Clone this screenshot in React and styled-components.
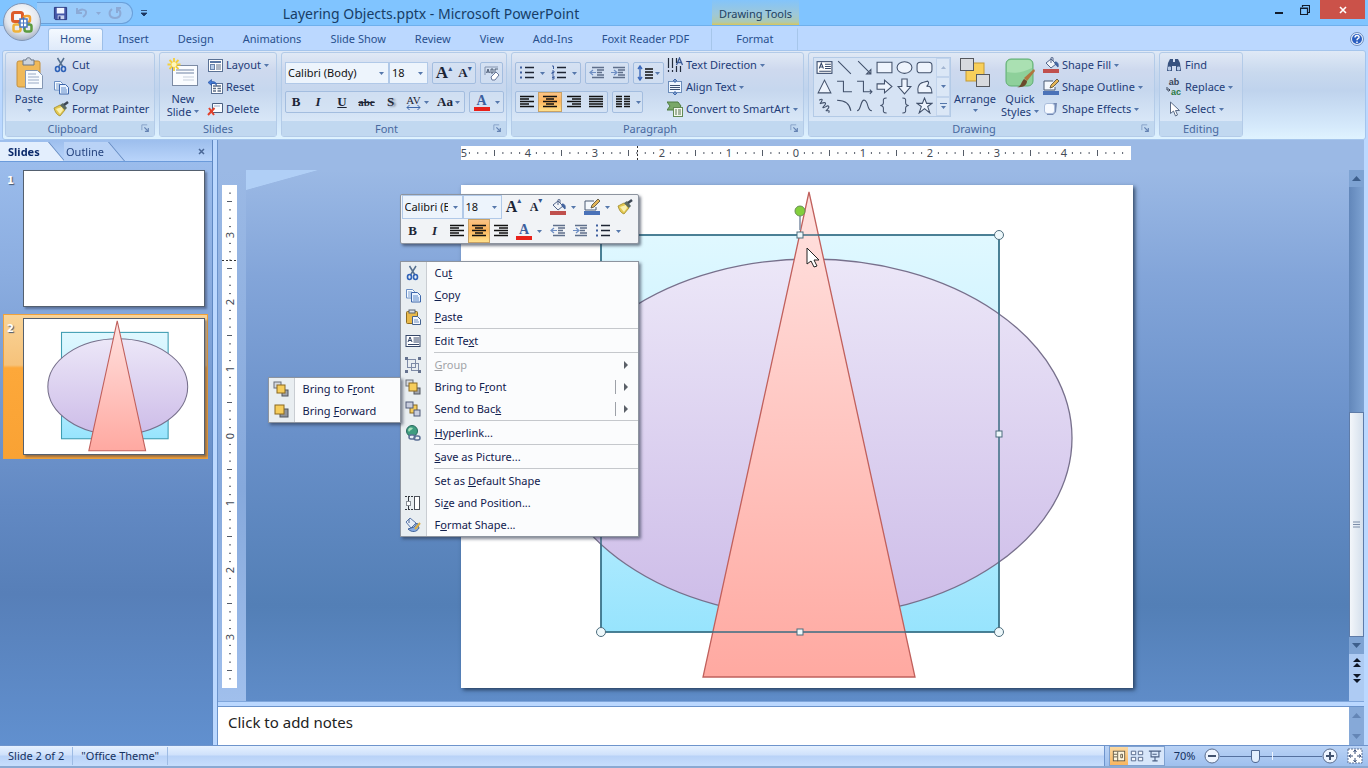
import { useState } from "react";
import styled, { createGlobalStyle, css } from "styled-components";

const ICONS = {
  cut: (
    <>
      <path d="M4.5 1 10 10M11 1 5.5 10" stroke="#56708f" strokeWidth="1.5" fill="none" />
      <ellipse cx="4.5" cy="12" rx="2" ry="2.5" fill="none" stroke="#2f62b8" strokeWidth="1.6" />
      <ellipse cx="10.5" cy="12" rx="2" ry="2.5" fill="none" stroke="#2f62b8" strokeWidth="1.6" />
    </>
  ),
  copy: (
    <>
      <path d="M1.5 2.5h6l2 2V11h-8z" fill="#f6fbff" stroke="#6b8fc4" />
      <path d="M3 5h4M3 7h4M3 9h3" stroke="#7d9fd0" />
      <path d="M6.5 5.5h6l3 3V15h-9z" fill="#eaf3ff" stroke="#3c66ab" />
      <path d="M8 9h5M8 11h6M8 13h6" stroke="#5f8bca" />
    </>
  ),
  paste: (
    <>
      <rect x="1.5" y="2.5" width="11" height="12" rx="1" fill="#e8b94a" stroke="#8c6c22" />
      <rect x="4" y="1" width="6" height="3" fill="#d9dde2" stroke="#59626e" />
      <path d="M7.5 7.5h5l3 3v5h-8z" fill="#f4f8ff" stroke="#44628f" />
      <path d="M9 11h4M9 13h5" stroke="#7190bf" />
    </>
  ),
  painter: (
    <>
      <path d="m1 7 6-3 5 5-5 6c-3-1-5-4-6-8z" fill="#e3c850" stroke="#a08a2c" strokeWidth=".8" />
      <path d="m3 8 6-2 1 3-3 4z" fill="#f9f0b0" />
      <path d="m7 4 3-2 4 5-2 2z" fill="#5c6b62" />
      <path d="m11 4 4-3" stroke="#3c4653" strokeWidth="2.5" />
    </>
  ),
  layout: (
    <>
      <rect x="1.5" y="2.5" width="14" height="12" fill="#fff" stroke="#5a7194" />
      <path d="M3 5h11" stroke="#5c79a5" strokeWidth="2" />
      <rect x="3.5" y="7.5" width="4" height="5" fill="#b9cde8" stroke="#6a84aa" />
      <path d="M9 8h5M9 10h5M9 12h5" stroke="#5d6f88" />
    </>
  ),
  reset: (
    <>
      <rect x="4.5" y="4.5" width="11" height="10" fill="#fff" stroke="#5a7194" />
      <path d="M6 7h8M6 9.5h3M10.5 9.5H14M6 12h3M10.5 12H14" stroke="#5d6f88" strokeWidth="1.4" />
      <path d="M1 3.5 4.5.5v2c4 0 5 1.5 5 4-1-2-2.5-2-5-2v2z" fill="#4279d6" stroke="#234f9c" strokeWidth=".6" />
    </>
  ),
  delete: (
    <>
      <path d="M5.5 2.5h10v9h-10z" fill="#f8fbff" stroke="#4a5f80" />
      <path d="M7 5h6" stroke="#9db0cb" />
      <path d="m2 7 5 7M7.5 7 1 14" stroke="#e2412b" strokeWidth="2" />
    </>
  ),
  textDirection: (
    <>
      <path d="M1.5 1v10M5.5 1v10M1.5 13v2M5.5 13v2" stroke="#222c3c" strokeWidth="1.2" />
      <path d="M9.5 15V9M13.5 15V9M9.5 6V1" stroke="#222c3c" strokeWidth="1.2" />
      <path d="m9.5 8 3-7 3 7M10.5 5.5h4" stroke="#3a5a96" strokeWidth="1.3" fill="none" />
    </>
  ),
  alignText: (
    <>
      <rect x="1.5" y="2.5" width="13" height="11" fill="#eff6ff" stroke="#6b8cba" />
      <path d="M3 6.5h10M3 8.5h10M3 10.5h10" stroke="#3d5273" />
      <path d="M8 0v4M6 2l2-2 2 2M8 12v4M6 14l2 2 2-2" stroke="#3e68ad" fill="none" />
    </>
  ),
  smartArt: (
    <>
      <path d="M0 1h11l3 4-3 4H0l3-4z" fill="#79a868" stroke="#4f7c42" />
      <rect x="6.5" y="6.5" width="9" height="9" fill="#f3f9ee" stroke="#628a54" />
      <path d="M8 9h2M11 9h3M8 11h2M11 11h3M8 13h2M11 13h3" stroke="#56704c" />
    </>
  ),
  fill: (
    <>
      <path d="m3 6 5-4 5 5-5 4z" fill="#f2f4f8" stroke="#52658a" />
      <path d="M8 6V1c0-1 2-1 2 0v3" fill="none" stroke="#52658a" />
      <path d="M12 5c3 0 3.5 2 3 5-1.5-1-2-2-3-3z" fill="#44659f" stroke="#44659f" />
      <rect y="12" width="16" height="4" fill="#c0504d" />
    </>
  ),
  outline: (
    <>
      <path d="M10 2H1v9h11V8" fill="#f4f8fd" stroke="#4a5a74" />
      <path d="m7 9 1-3 6-6 2 2-6 6z" fill="#e4b455" stroke="#4c4634" strokeWidth=".8" />
      <rect y="12" width="16" height="4" fill="#4a72b8" />
    </>
  ),
  effects: (
    <>
      <path d="M3 5 6 2h8l-1 9-3 3H4z" fill="#7489b2" />
      <rect x="1.5" y="2.5" width="10" height="10" rx="2.5" fill="#f5f9ff" stroke="#aabddc" />
    </>
  ),
  find: (
    <>
      <path d="M2 6 4 2h3v3h2V2h3l2 4 1 8h-5V9H6v5H1z" fill="#38527f" />
      <path d="M2.5 10h2v3h-2zM11.5 10h2v3h-2z" fill="#b9cbe6" stroke="#b9cbe6" />
    </>
  ),
  select: <path d="M4.5 1v11.5l3-2.5 2 5 2-1-2-4.5h4z" fill="#fff" stroke="#5a6b86" />,
  textBox: (
    <>
      <rect x="1" y="2.5" width="14" height="11" fill="#fff" stroke="#36486a" />
      <path d="m3 9 2-5 2 5M4 7.5h2M8.5 5H14M8.5 7H14M8.5 9H14M3 11.5h11" stroke="#36486a" fill="none" />
    </>
  ),
  group: (
    <>
      <rect x="2.5" y="2.5" width="8" height="8" fill="none" stroke="#7e8ba6" />
      <rect x="6.5" y="6.5" width="7" height="7" fill="none" stroke="#7e8ba6" />
      <path d="M0 0h3v3H0zM13 0h3v3h-3zM0 13h3v3H0zM13 13h3v3h-3z" fill="#66738f" />
    </>
  ),
  bringFront: (
    <>
      <rect x="1" y="1" width="7" height="6" fill="#d5d9df" stroke="#6a6f78" />
      <rect x="9" y="9" width="6" height="6" fill="#a0a5ae" stroke="#50555e" />
      <rect x="4" y="4" width="8" height="8" fill="#f6cd5c" stroke="#8a6820" />
    </>
  ),
  bringForward: (
    <>
      <rect x="7" y="6" width="8" height="8" fill="#8e939c" stroke="#50555e" />
      <rect x="2" y="2" width="9" height="9" fill="#f6cd5c" stroke="#8a6820" />
    </>
  ),
  sendBack: (
    <>
      <rect x="5" y="4" width="7" height="8" fill="#f6cd5c" stroke="#8a6820" />
      <rect x="1" y="1" width="7" height="6" fill="#c8cddd" stroke="#505b78" />
      <rect x="9" y="9" width="6" height="6" fill="#c8cddd" stroke="#505b78" />
    </>
  ),
  link: (
    <>
      <circle cx="7" cy="6" r="5.5" fill="#3f9c80" stroke="#27695d" />
      <path d="M3 5c1-3 3-3 5-2-1 2-3 2-4 4z" fill="#a5dfb9" />
      <rect x="4" y="10" width="6" height="4" rx="2" fill="#e8eef6" stroke="#5a6f95" strokeWidth="1.5" />
      <rect x="9" y="11" width="6" height="4" rx="2" fill="none" stroke="#5a6f95" strokeWidth="1.5" />
    </>
  ),
  size: (
    <>
      <rect x="9.5" y="1.5" width="5" height="13" fill="#fff" stroke="#4b5159" />
      <rect x="1.5" y="6.5" width="4" height="4" fill="#fff" stroke="#8a9097" />
      <path d="M0 1.5h9M0 14.5h9" stroke="#33373d" strokeDasharray="2 1" />
      <path d="M3.5 2v4M3.5 11v3" stroke="#33373d" />
    </>
  ),
  formatShape: (
    <>
      <path d="m1 5 4-4 6 5-5 5z" fill="#e8eef8" stroke="#5877aa" />
      <path d="M4 6V2" stroke="#44608f" />
      <path d="M3 12c4 4 9 3 11-1l-2-5-3 4z" fill="#86abe2" stroke="#42649c" />
      <path d="m10 12 5-6" stroke="#dcae45" strokeWidth="2" />
    </>
  ),
  alignLeft: <path d="M1 2.5h14M1 5h9M1 7.5h14M1 10h9M1 12.5h14" stroke="#111" strokeWidth="1.4" />,
  alignCenter: <path d="M1 2.5h14M4 5h8M1 7.5h14M4 10h8M1 12.5h14" stroke="#111" strokeWidth="1.4" />,
  alignRight: <path d="M1 2.5h14M6 5h9M1 7.5h14M6 10h9M1 12.5h14" stroke="#111" strokeWidth="1.4" />,
  justify: <path d="M1 2.5h14M1 5h14M1 7.5h14M1 10h14M1 12.5h14" stroke="#111" strokeWidth="1.4" />,
  columns: (
    <path d="M1 2.5h6M1 5h6M1 7.5h6M1 10h6M1 12.5h6M9 2.5h6M9 5h6M9 7.5h6M9 10h6M9 12.5h6" stroke="#111" strokeWidth="1.4" />
  ),
  bullets: (
    <>
      <path d="M6 2.5h9M6 7.5h9M6 12.5h9" stroke="#1d2433" strokeWidth="1.3" />
      <path d="M1 1.5h2v2H1zM1 6.5h2v2H1zM1 11.5h2v2H1z" fill="#3f5f9e" />
    </>
  ),
  numbering: (
    <>
      <path d="M6 2.5h9M6 7.5h9M6 12.5h9" stroke="#1d2433" strokeWidth="1.3" />
      <path d="M1 1h1.5v3M1 6h2v1.5H1V9h2M1 11h2v3H1M1 12.5h2" stroke="#3f5f9e" fill="none" />
    </>
  ),
  outdent: (
    <>
      <path d="M3 2.5h12M8 5h7M8 7.5h5M8 10h7M3 12.5h12" stroke="#5f6f8b" strokeWidth="1.3" />
      <path d="M1 7.5h6M4 5 1 7.5 4 10" stroke="#6f8fc4" fill="none" strokeWidth="1.2" />
    </>
  ),
  indent: (
    <>
      <path d="M3 2.5h12M8 5h7M8 7.5h5M8 10h7M3 12.5h12" stroke="#5f6f8b" strokeWidth="1.3" />
      <path d="M1 7.5h6M4 5l3 2.5L4 10" stroke="#6f8fc4" fill="none" strokeWidth="1.2" />
    </>
  ),
  lineSpacing: (
    <>
      <path d="M8 4h8M8 7h8M8 10h8M8 13h8" stroke="#111" strokeWidth="1.4" />
      <path d="M3 1v14M1 4l2-3 2 3M1 12l2 3 2-3" stroke="#3f6bbb" strokeWidth="1.4" fill="none" />
    </>
  ),
  eraser: (
    <>
      <path d="M1 10V2h13" fill="none" stroke="#8393ae" />
      <path d="m2.5 8 1.5-4 1.5 4M3 7h2M7 4v4h2V4zM14 4h-3v4h2" stroke="#33415c" fill="none" strokeWidth=".8" />
      <path d="m7 12 5-5 3 3-4 5H8z" fill="#fff" stroke="#68779a" />
    </>
  ),
  launcher: (
    <>
      <path d="M1.5 11V1.5H11" stroke="#7f9ac4" strokeWidth="1.5" fill="none" />
      <path d="m6 6 6 6M13 7v6H7" stroke="#6583b3" fill="none" strokeWidth="2" />
    </>
  ),
  save: (
    <>
      <path d="M1.5 1.5h13v13h-12l-1-1z" fill="#4457a8" stroke="#27357c" />
      <rect x="4" y="2" width="8" height="6" fill="#f1f5ff" />
      <rect x="5" y="10" width="7" height="4" fill="#c7d2ee" />
      <rect x="6" y="11" width="2" height="3" fill="#27357c" />
    </>
  ),
  undo: <path d="M3 3v5h5M3 8c3-5 10-4 9 0 0 2-2 3-3 4" fill="none" stroke="#8caad6" strokeWidth="2" />,
  redo: <path d="M5 4c-4 3-3 9 3 9s7-6 3-9M10 8V3h4" fill="none" stroke="#8caad6" strokeWidth="2" />,
  normalView: (
    <>
      <rect x="1.5" y="2.5" width="13" height="11" fill="#fff6dd" stroke="#5c5442" />
      <path d="M6.5 3v11M2 6h4M2 9h4M10 6h2v4h-2z" stroke="#5c5442" fill="none" />
    </>
  ),
  sorterView: (
    <path d="M1.5 2.5h5v4h-5zM9.5 2.5h5v4h-5zM1.5 9.5h5v4h-5zM9.5 9.5h5v4h-5z" fill="#f5f9ff" stroke="#4b5f83" />
  ),
  showView: <path d="M1 2.5h14M3.5 3v6h9V3M8 9v4M5 13.5h6M5 6h5" fill="none" stroke="#4b5f83" strokeWidth="1.3" />,
  fit: (
    <>
      <rect x="1" y="1" width="14" height="14" fill="#fff" stroke="#5b6f93" strokeDasharray="2 1" />
      <path d="M8 2v4M8 10v4M2 8h4M10 8h4M6.5 4 8 2l1.5 2M6.5 12 8 14l1.5-2M4 6.5 2 8l2 1.5M12 6.5 14 8l-2 1.5" stroke="#3d527a" fill="none" />
    </>
  ),
  minus: (
    <>
      <circle cx="8" cy="8" r="7" fill="#eef5ff" stroke="#5a6c8c" />
      <path d="M4 8h8" stroke="#42536f" strokeWidth="2" />
    </>
  ),
  plus: (
    <>
      <circle cx="8" cy="8" r="7" fill="#eef5ff" stroke="#5a6c8c" />
      <path d="M4 8h8M8 4v8" stroke="#42536f" strokeWidth="2" />
    </>
  )
};

const SHAPES = [
  { name: "Text Box", shape: ICONS.textBox },
  { name: "Line", shape: <path d="m2 2 12 12" /> },
  { name: "Arrow", shape: <path d="m2 2 12 12M14 10v4h-4z" /> },
  { name: "Rectangle", shape: <path d="M1 3h14v10H1z" /> },
  { name: "Oval", shape: <ellipse cx="8" cy="8" rx="7" ry="5.5" /> },
  { name: "Rounded Rectangle", shape: <rect x="1" y="3" width="14" height="10" rx="3" /> },
  { name: "Triangle", shape: <path d="m8 2 6 12H2z" /> },
  { name: "Elbow Connector", shape: <path fill="none" d="M1 3h6v10h8" /> },
  { name: "Elbow Arrow", shape: <path fill="none" d="M1 3h6v10h8M13 11l2 2-2 2" /> },
  { name: "Right Arrow", shape: <path d="M1 5.5h7V2l7 6-7 6v-3.5H1z" /> },
  { name: "Down Arrow", shape: <path d="M5.5 1v7H2l6 7 6-7h-3.5V1z" /> },
  { name: "Freeform", shape: <path d="M2 14c-1-4 0-9 5-10l4-1c2 1 0 4-1 5 3-1 5 1 5 6z" /> },
  { name: "Scribble", shape: <path fill="none" d="M3 3c5-3 2 2 1 3s5-2 5 0-4 4-2 4 4-3 5-1-4 4-2 4 3-1 2 2" /> },
  { name: "Arc", shape: <path fill="none" d="M1 3c8 0 12 4 13 10" /> },
  { name: "Curve", shape: <path fill="none" d="M1 13C5 13 4 2 8 3s2 10 7 10" /> },
  { name: "Left Brace", shape: <path fill="none" d="M10 1C6 1 7 3 7 5s-1 3-3 3c2 0 3 1 3 3s-1 4 3 4" /> },
  { name: "Right Brace", shape: <path fill="none" d="M6 1c4 0 3 2 3 4s1 3 3 3c-2 0-3 1-3 3s1 4-3 4" /> },
  { name: "Star", shape: <path d="m8 1 2 5h5l-4 3 2 6-5-4-5 4 2-6-4-3h5z" /> }
];

const Icon = ({ name, size = 16 }) => (
  <svg width={size} height={size} viewBox="0 0 16 16" aria-hidden="true">
    {ICONS[name]}
  </svg>
);

const Caret = ({ up, color = "#5577ab" }) => (
  <svg width="5" height="3" viewBox="0 0 5 3" aria-hidden="true">
    <path d={up ? "M0 3h5L2.5 0z" : "M0 0h5L2.5 3z"} fill={color} />
  </svg>
);

const Artwork = ({ id, line = 1 }) => (
  <>
    <defs>
      <linearGradient id={`sq${id}`} x1="0" y1="0" x2="0" y2="1">
        <stop offset="0" stopColor="#e0f8ff" />
        <stop offset=".6" stopColor="#bdeeff" />
        <stop offset="1" stopColor="#97e4fd" />
      </linearGradient>
      <linearGradient id={`el${id}`} x1="0" y1="0" x2="0" y2="1">
        <stop offset="0" stopColor="#ece7f8" />
        <stop offset="1" stopColor="#cdbce8" />
      </linearGradient>
      <linearGradient id={`tr${id}`} x1="0" y1="0" x2="0" y2="1">
        <stop offset="0" stopColor="#ffe2e0" />
        <stop offset="1" stopColor="#ffa9a1" />
      </linearGradient>
    </defs>
    <rect x="140" y="50" width="398" height="397" fill={`url(#sq${id})`} stroke="#3f9db2" strokeWidth={line} />
    <ellipse cx="350" cy="253" rx="261" ry="179" fill={`url(#el${id})`} stroke="#77708c" strokeWidth={line} />
    <path d="M348 7 454 492H242z" fill={`url(#tr${id})`} stroke="#c0605c" strokeWidth={line} />
  </>
);

const tickMarks = (from, to) => {
  const ticks = [];
  for (let i = from; i <= to; i += 1) {
    if (i % 8 !== 0) ticks.push(i);
  }
  return ticks;
};

const HorizontalRuler = () => (
  <svg width="672" height="14" viewBox="0 0 672 14">
    <rect width="670" height="14" fill="#fff" />
    {tickMarks(-39, 39).map((t) => {
      const x = 335 + (t * 67) / 8;
      return <path key={t} d={t % 4 === 0 ? `M${x} 4v6` : `M${x} 6v2`} stroke="#555c68" />;
    })}
    {[5, 4, 3, 2, 1, 0, 1, 2, 3, 4].map((n, i) => (
      <RulerText key={i} x={i === 0 ? 3 : i * 67} y="11">
        {n}
      </RulerText>
    ))}
    <path d="M176.5 0v14" stroke="#333" strokeDasharray="2 2" />
  </svg>
);

const VerticalRuler = () => (
  <svg width="15" height="503" viewBox="0 0 15 503">
    <rect width="15" height="503" fill="#fff" />
    {tickMarks(-29, 29).map((t) => {
      const y = 251 + (t * 67) / 8;
      return <path key={t} d={t % 4 === 0 ? `M5 ${y}h5` : `M7 ${y}h2`} stroke="#555c68" />;
    })}
    {[3, 2, 1, 0, 1, 2, 3].map((n, i) => (
      <RulerText key={i} transform={`translate(12 ${50 + i * 67}) rotate(-90)`}>
        {n}
      </RulerText>
    ))}
    <path d="M0 75.5h15" stroke="#333" strokeDasharray="2 2" />
  </svg>
);

const Selection = () => (
  <g fill="#eef8fb" stroke="#4d6d7d">
    <rect x="140" y="50" width="398" height="397" fill="none" stroke="#3b6c82" strokeWidth="1.5" />
    <path d="M339 31v14" stroke="#7d8da5" strokeWidth="1.5" />
    <circle cx="339" cy="26" r="5" fill="#83cf3c" stroke="#6a8f55" />
    {[[140, 50], [538, 50], [140, 447], [538, 447]].map(([x, y]) => (
      <circle key={`${x}-${y}`} cx={x} cy={y} r="4.5" />
    ))}
    {[[339, 50], [339, 447], [140, 249], [538, 249]].map(([x, y]) => (
      <rect key={`${x}-${y}`} x={x - 3} y={y - 3} width="6" height="6" />
    ))}
    <path d="M346 63v16l4-3 3 6 3-1-3-6h5z" fill="#fff" stroke="#222" />
  </g>
);

const RibbonRow = ({ icon, children, menu }) => (
  <SmallButton type="button">
    {typeof icon === "string" ? <Icon name={icon} /> : icon}
    <span>{children}</span>
    {menu && <Caret />}
  </SmallButton>
);

const RibbonGroup = ({ title, width, launcher, children }) => (
  <Group $width={width}>
    <GroupBody>{children}</GroupBody>
    <GroupTitle>
      <span>{title}</span>
      {launcher && (
        <Launcher type="button" aria-label={`${title} settings`}>
          <Icon name="launcher" size={9} />
        </Launcher>
      )}
    </GroupTitle>
  </Group>
);

const Combo = ({ label, width, options }) => (
  <ComboBox $width={width}>
    <select aria-label={label}>
      {options.map((o) => (
        <option key={o}>{o}</option>
      ))}
    </select>
    <Caret />
  </ComboBox>
);

const TOOL_TABS = ["Home", "Insert", "Design", "Animations", "Slide Show", "Review", "View", "Add-Ins", "Foxit Reader PDF"];

const MENU = [
  { icon: "cut", text: <>Cu<u>t</u></> },
  { icon: "copy", text: <><u>C</u>opy</> },
  { icon: "paste", text: <><u>P</u>aste</> },
  null,
  { icon: "textBox", text: <>Edit Te<u>x</u>t</> },
  null,
  { icon: "group", text: <><u>G</u>roup</>, disabled: true, arrow: true },
  { icon: "bringFront", text: <>Bring to F<u>r</u>ont</>, arrow: true, split: true },
  { icon: "sendBack", text: <>Send to Bac<u>k</u></>, arrow: true, split: true },
  null,
  { icon: "link", text: <><u>H</u>yperlink...</> },
  null,
  { icon: null, text: <><u>S</u>ave as Picture...</> },
  null,
  { icon: null, text: <>Set as <u>D</u>efault Shape</> },
  { icon: "size", text: <>Si<u>z</u>e and Position...</> },
  { icon: "formatShape", text: <>F<u>o</u>rmat Shape...</> }
];

const App = () => {
  const [tab, setTab] = useState("Home");
  const [zoom, setZoom] = useState(33);

  return (
    <Window>
      <GlobalStyle />
      <OfficeButton type="button" aria-label="Office Button">
        <svg width="40" height="40" viewBox="0 0 40 40">
          <defs>
            <radialGradient id="orb" cx=".5" cy=".35" r=".65">
              <stop offset="0" stopColor="#fff" />
              <stop offset=".65" stopColor="#e3e7ee" />
              <stop offset="1" stopColor="#a7b2c4" />
            </radialGradient>
          </defs>
          <circle cx="20" cy="20" r="18.5" fill="url(#orb)" stroke="#8196b6" />
          <rect x="10.5" y="10.5" width="10" height="9" rx="2" fill="none" stroke="#dd5c2a" strokeWidth="3" />
          <rect x="22" y="14" width="6" height="6" rx="2" fill="none" stroke="#f0a032" strokeWidth="2.5" />
          <rect x="11.5" y="22.5" width="7" height="7" rx="2" fill="none" stroke="#efb23a" strokeWidth="2.5" />
          <rect x="22.5" y="22.5" width="7" height="7" rx="2" fill="none" stroke="#5b9b3f" strokeWidth="2.5" />
          <path d="M18 17h7v8h-7z" fill="#fff" stroke="#4a78c4" strokeWidth="1.5" />
          <path d="M21.5 15v12M16 21h12" stroke="#4a78c4" />
        </svg>
      </OfficeButton>

      <TitleBar>
        <QuickAccess>
          <IconButton type="button" aria-label="Save"><Icon name="save" size={15} /></IconButton>
          <IconButton type="button" aria-label="Undo"><Icon name="undo" /></IconButton>
          <IconButton type="button" aria-label="Undo history"><Caret color="#8caad6" /></IconButton>
          <IconButton type="button" aria-label="Redo"><Icon name="redo" /></IconButton>
        </QuickAccess>
        <IconButton type="button" aria-label="Customize Quick Access Toolbar">
          <svg width="6" height="6" viewBox="0 0 6 6"><path d="M0 .5h6M0 3h6L3 6z" stroke="#1c355e" fill="#1c355e" strokeWidth=".8" /></svg>
        </IconButton>
        <DocumentTitle>Layering Objects.pptx - Microsoft PowerPoint</DocumentTitle>
        <ContextTools>Drawing Tools</ContextTools>
        <Spacer />
        <WindowButton type="button" aria-label="Minimize">
          <svg width="10" height="10" viewBox="0 0 10 10"><path d="M1 8h8" stroke="#111c2c" strokeWidth="2" /></svg>
        </WindowButton>
        <WindowButton type="button" aria-label="Restore">
          <svg width="10" height="10" viewBox="0 0 10 10"><path d="M.5 3.5h7v6h-7zM0 3h8M2.5 2V.5h7v7H8" stroke="#111c2c" fill="none" strokeWidth="1.2" /></svg>
        </WindowButton>
        <CloseButton type="button" aria-label="Close">
          <svg width="8" height="8" viewBox="0 0 8 8"><path d="m1 1 6 6M7 1 1 7" stroke="#fff" strokeWidth="1.6" /></svg>
        </CloseButton>
      </TitleBar>

      <TabBar>
        {TOOL_TABS.map((t) => (
          <Tab key={t} type="button" $active={tab === t} onClick={() => setTab(t)}>
            {t}
          </Tab>
        ))}
        <FormatTab type="button">Format</FormatTab>
        <Spacer />
        <IconButton type="button" aria-label="Help">
          <svg width="14" height="14" viewBox="0 0 14 14">
            <circle cx="7" cy="7" r="6.5" fill="#e9f2ff" stroke="#6d8dbd" />
            <circle cx="7" cy="7" r="5" fill="#2b5fc0" />
            <path d="M5 5.5c0-3 4.5-2.5 4 0-.3 1-2 1.2-2 2.7M7 9.5V11" stroke="#fff" strokeWidth="1.5" fill="none" />
          </svg>
        </IconButton>
      </TabBar>

      <Ribbon>
        <RibbonGroup title="Clipboard" width={150} launcher>
          <BigButton type="button" $width={44}>
            <svg width="30" height="34" viewBox="0 0 30 34">
              <rect x="3" y="4" width="23" height="26" rx="2" fill="#f0b959" stroke="#c4903f" />
              <path d="M9 3h3c0-3 5-3 5 0h3v5H9z" fill="#cbd2dc" stroke="#6a7687" />
              <path d="M11.5 13.5h12l5 5v13h-17z" fill="#f7fbff" stroke="#8396b3" />
              <path d="M14 17h8M14 20h11M14 23h11M14 26h11" stroke="#98a9c5" />
            </svg>
            <span>Paste</span>
            <Caret />
          </BigButton>
          <Column>
            <RibbonRow icon="cut">Cut</RibbonRow>
            <RibbonRow icon="copy">Copy</RibbonRow>
            <RibbonRow icon="painter">Format Painter</RibbonRow>
          </Column>
        </RibbonGroup>

        <RibbonGroup title="Slides" width={118}>
          <BigButton type="button" $width={44}>
            <svg width="32" height="34" viewBox="0 0 32 34">
              <rect x="5.5" y="8.5" width="25" height="20" fill="#fafcff" stroke="#7c8ba4" />
              <path d="M9 13h18M9 16h18" stroke="#b4bfd1" strokeWidth="2" />
              <path d="M16 20h11M16 23h11" stroke="#c6cfdd" />
              <path d="M7 1v13M.5 7.5h13M2.5 3l9 9M11.5 3l-9 9" stroke="#f4cf3c" strokeWidth="1.8" />
              <circle cx="7" cy="7.5" r="2.5" fill="#fff7b8" />
            </svg>
            <span>New</span>
            <Inline>Slide <Caret /></Inline>
          </BigButton>
          <Column>
            <RibbonRow icon="layout" menu>Layout</RibbonRow>
            <RibbonRow icon="reset">Reset</RibbonRow>
            <RibbonRow icon="delete">Delete</RibbonRow>
          </Column>
        </RibbonGroup>

        <RibbonGroup title="Font" width={226} launcher>
          <ToolRows>
            <ToolRow>
              <ComboPair>
                <Combo label="Font" width={104} options={["Calibri (Body)", "Arial", "Cambria"]} />
                <Combo label="Font size" width={39} options={["18", "20", "24"]} />
              </ComboPair>
              <ToolSet>
                <Tool type="button" $width={22} aria-label="Grow font"><Glyph $size={17}>A</Glyph><Sup>▴</Sup></Tool>
                <Tool type="button" $width={20} aria-label="Shrink font"><Glyph $size={13}>A</Glyph><Sup>▾</Sup></Tool>
              </ToolSet>
              <ToolSet>
                <Tool type="button" $width={21} aria-label="Clear formatting"><Icon name="eraser" /></Tool>
              </ToolSet>
            </ToolRow>
            <ToolRow>
              <ToolSet>
                <Tool type="button" $width={20} aria-label="Bold"><Glyph $size={13}>B</Glyph></Tool>
                <Tool type="button" $width={24} aria-label="Italic"><Glyph $size={13} $italic>I</Glyph></Tool>
                <Tool type="button" $width={24} aria-label="Underline"><Glyph $size={13} $line="underline">U</Glyph></Tool>
                <Tool type="button" $width={25} aria-label="Strikethrough"><Glyph $size={11} $line="line-through">abc</Glyph></Tool>
                <Tool type="button" $width={23} aria-label="Shadow"><Glyph $size={13} $shadow>S</Glyph></Tool>
                <Tool type="button" $width={31} aria-label="Character spacing">
                  <Stack>
                    <Glyph $size={11} $plain>AV</Glyph>
                    <svg width="15" height="5" viewBox="0 0 15 5"><path d="M1 2.5h13M3.5 0 1 2.5 3.5 5M11.5 0 14 2.5 11.5 5" stroke="#3e68ad" fill="none" /></svg>
                  </Stack>
                  <Caret />
                </Tool>
                <Tool type="button" $width={31} aria-label="Change case"><Glyph $size={13}>Aa</Glyph><Gap $small /><Caret /></Tool>
              </ToolSet>
              <ToolSet>
                <Tool type="button" $width={33} aria-label="Font color"><FontColor>A</FontColor><Gap /><Caret /></Tool>
              </ToolSet>
            </ToolRow>
          </ToolRows>
        </RibbonGroup>

        <RibbonGroup title="Paragraph" width={293} launcher>
          <ToolRows>
            <ToolRow>
              <ToolSet>
                <Tool type="button" $width={32} aria-label="Bullets"><Icon name="bullets" /><Gap /><Caret /></Tool>
                <Tool type="button" $width={32} aria-label="Numbering"><Icon name="numbering" /><Gap /><Caret /></Tool>
              </ToolSet>
              <ToolSet>
                <Tool type="button" $width={21} aria-label="Decrease indent"><Icon name="outdent" /></Tool>
                <Tool type="button" $width={21} aria-label="Increase indent"><Icon name="indent" /></Tool>
              </ToolSet>
              <ToolSet>
                <Tool type="button" $width={29} aria-label="Line spacing"><Icon name="lineSpacing" /><Gap $small /><Caret /></Tool>
              </ToolSet>
            </ToolRow>
            <ToolRow>
              <ToolSet>
                <Tool type="button" $width={22} aria-label="Align left"><Icon name="alignLeft" /></Tool>
                <Tool type="button" $width={24} $on aria-label="Center"><Icon name="alignCenter" /></Tool>
                <Tool type="button" $width={23} aria-label="Align right"><Icon name="alignRight" /></Tool>
                <Tool type="button" $width={22} aria-label="Justify"><Icon name="justify" /></Tool>
              </ToolSet>
              <ToolSet>
                <Tool type="button" $width={29} aria-label="Columns"><Icon name="columns" /><Gap /><Caret /></Tool>
              </ToolSet>
            </ToolRow>
          </ToolRows>
          <Column>
            <RibbonRow icon="textDirection" menu>Text Direction</RibbonRow>
            <RibbonRow icon="alignText" menu>Align Text</RibbonRow>
            <RibbonRow icon="smartArt" menu>Convert to SmartArt</RibbonRow>
          </Column>
        </RibbonGroup>

        <RibbonGroup title="Drawing" width={347} launcher>
          <Gallery>
            <GalleryGrid>
              {SHAPES.map(({ name, shape }) => (
                <ShapeButton key={name} type="button" aria-label={name}>
                  <svg width="17" height="17" viewBox="0 0 16 16" fill="#eef4fd" stroke="#42516b">{shape}</svg>
                </ShapeButton>
              ))}
            </GalleryGrid>
            <GalleryScroll>
              <button type="button" aria-label="Previous shapes"><Caret up color="#a3b6d2" /></button>
              <button type="button" aria-label="Next shapes"><Caret /></button>
              <button type="button" aria-label="More shapes">
                <svg width="7" height="7" viewBox="0 0 7 7"><path d="M0 .5h7" stroke="#5577ab" /><path d="M1 3h5L3.5 6z" fill="#5577ab" /></svg>
              </button>
            </GalleryScroll>
          </Gallery>
          <BigButton type="button" $width={44}>
            <svg width="32" height="34" viewBox="0 0 32 34">
              <rect x="7" y="6" width="18" height="18" fill="#f8cf5a" stroke="#c49a35" />
              <rect x="1.5" y="1.5" width="13" height="12" fill="#d8dade" stroke="#55585e" />
              <rect x="17.5" y="17.5" width="13" height="12" fill="#d8dade" stroke="#55585e" />
            </svg>
            <span>Arrange</span>
            <Caret />
          </BigButton>
          <BigButton type="button" $width={42}>
            <svg width="32" height="34" viewBox="0 0 32 34">
              <rect x="2" y="2" width="27" height="27" rx="5" fill="#8ed09a" stroke="#5fae72" />
              <path d="M3 15c9 2 16 0 25-4V7c0-2-1-4-4-4H7C5 3 3 4 3 7z" fill="#aae0b2" />
              <path d="m20 21 10-9 1 2-8 10z" fill="#b0763f" />
              <path d="M13 30c4 0 4-5 7-8l3 2c0 4-4 7-10 6z" fill="#6b4a2c" />
            </svg>
            <span>Quick</span>
            <Inline>Styles <Caret /></Inline>
          </BigButton>
          <Column>
            <RibbonRow icon="fill" menu>Shape Fill</RibbonRow>
            <RibbonRow icon="outline" menu>Shape Outline</RibbonRow>
            <RibbonRow icon="effects" menu>Shape Effects</RibbonRow>
          </Column>
        </RibbonGroup>

        <RibbonGroup title="Editing" width={84}>
          <Column $inset>
            <RibbonRow icon="find">Find</RibbonRow>
            <RibbonRow
              icon={
                <ReplaceMark aria-hidden="true">
                  <b>ab</b>
                  <ReplaceTarget>
                    <svg width="5" height="6" viewBox="0 0 5 6"><path d="M1 0v3h3M2.5 1.5 4 3 2.5 4.5" fill="none" stroke="#3a4558" /></svg>
                    <b>ac</b>
                  </ReplaceTarget>
                </ReplaceMark>
              }
              menu
            >
              Replace
            </RibbonRow>
            <RibbonRow icon="select" menu>Select</RibbonRow>
          </Column>
        </RibbonGroup>
      </Ribbon>

      <Workspace>
        <SlidePane>
          <PaneHeader>
            <PaneTabs>
              <PaneTab type="button" $active>Slides</PaneTab>
              <PaneTab type="button">Outline</PaneTab>
            </PaneTabs>
            <Spacer />
            <IconButton type="button" aria-label="Close pane">
              <svg width="7" height="7" viewBox="0 0 7 7"><path d="m1 1 5 5M6 1 1 6" stroke="#4a6796" strokeWidth="1.5" /></svg>
            </IconButton>
          </PaneHeader>
          <SlideList>
            <SlideItem>
              <span>1</span>
              <Thumb viewBox="0 0 672 503" />
            </SlideItem>
            <SlideItem $selected>
              <span>2</span>
              <Thumb viewBox="0 0 672 503">
                <Artwork id="t" line={4} />
              </Thumb>
            </SlideItem>
          </SlideList>
        </SlidePane>

        <EditorColumn>
          <Editor>
            <Corner />
            <TopRuler><HorizontalRuler /></TopRuler>
            <Corner />
            <SideRuler><VerticalRuler /></SideRuler>
            <Canvas>
              <Slide>
                <svg width="672" height="503" viewBox="0 0 672 503">
                  <Artwork id="m" line={1.3} />
                  <Selection />
                </svg>

                <MiniToolbar>
                  <MiniRow>
                    <Combo label="Mini font" width={61} options={["Calibri (Body)", "Arial"]} />
                    <Combo label="Mini font size" width={39} options={["18", "20"]} />
                    <Tool type="button" $width={24} aria-label="Grow font"><Glyph $size={16}>A</Glyph><Sup>▴</Sup></Tool>
                    <Tool type="button" $width={21} aria-label="Shrink font"><Glyph $size={12}>A</Glyph><Sup>▾</Sup></Tool>
                    <Tool type="button" $width={33} aria-label="Shape fill"><Icon name="fill" /><Gap /><Caret /></Tool>
                    <Tool type="button" $width={34} aria-label="Shape outline"><Icon name="outline" /><Gap /><Caret /></Tool>
                    <Tool type="button" $width={23} aria-label="Format painter"><Icon name="painter" /></Tool>
                  </MiniRow>
                  <MiniRow>
                    <Tool type="button" $width={22} aria-label="Bold"><Glyph $size={13}>B</Glyph></Tool>
                    <Tool type="button" $width={22} aria-label="Italic"><Glyph $size={13} $italic>I</Glyph></Tool>
                    <Tool type="button" $width={22} aria-label="Align left"><Icon name="alignLeft" /></Tool>
                    <Tool type="button" $width={22} $on aria-label="Center"><Icon name="alignCenter" /></Tool>
                    <Tool type="button" $width={22} aria-label="Align right"><Icon name="alignRight" /></Tool>
                    <Tool type="button" $width={35} aria-label="Font color"><FontColor>A</FontColor><Gap /><Caret /></Tool>
                    <Tool type="button" $width={22} aria-label="Decrease indent"><Icon name="outdent" /></Tool>
                    <Tool type="button" $width={22} aria-label="Increase indent"><Icon name="indent" /></Tool>
                    <Tool type="button" $width={34} aria-label="Bullets"><Icon name="bullets" /><Gap /><Caret /></Tool>
                  </MiniRow>
                </MiniToolbar>

                <ContextMenu>
                  {MENU.map((item, i) =>
                    item ? (
                      <MenuItem key={i} type="button" disabled={item.disabled}>
                        <MenuIcon>{item.icon && <Icon name={item.icon} />}</MenuIcon>
                        <MenuText>{item.text}</MenuText>
                        {item.arrow && (
                          <MenuArrow $split={item.split}>
                            <svg width="4" height="8" viewBox="0 0 4 8"><path d="M0 0v8l4-4z" fill="#5b6068" /></svg>
                          </MenuArrow>
                        )}
                      </MenuItem>
                    ) : (
                      <Separator key={i} />
                    )
                  )}
                </ContextMenu>

                <SubMenu>
                  <MenuItem type="button">
                    <MenuIcon><Icon name="bringFront" /></MenuIcon>
                    <MenuText>Bring to F<u>r</u>ont</MenuText>
                  </MenuItem>
                  <MenuItem type="button">
                    <MenuIcon><Icon name="bringForward" /></MenuIcon>
                    <MenuText>Bring <u>F</u>orward</MenuText>
                  </MenuItem>
                </SubMenu>
              </Slide>
            </Canvas>
            <ScrollColumn>
              <ScrollButton type="button" aria-label="Scroll up"><svg width="9" height="5" viewBox="0 0 9 5"><path d="M0 5h9L4.5 0z" fill="#3d5f8c" /></svg></ScrollButton>
              <ScrollTrack>
                <ScrollThumb>
                  <svg width="7" height="8" viewBox="0 0 7 8"><path d="M0 1h7M0 3.5h7M0 6h7" stroke="#7b8ca8" /></svg>
                </ScrollThumb>
              </ScrollTrack>
              <ScrollButton type="button" aria-label="Scroll down"><svg width="9" height="5" viewBox="0 0 9 5"><path d="M0 0h9L4.5 5z" fill="#3d5f8c" /></svg></ScrollButton>
              <JumpButton type="button" aria-label="Previous slide"><svg width="8" height="9" viewBox="0 0 8 9"><path d="M0 4h8L4 0zM0 9h8L4 5z" fill="#0d1626" /></svg></JumpButton>
              <JumpButton type="button" aria-label="Next slide"><svg width="8" height="9" viewBox="0 0 8 9"><path d="M0 0h8L4 4zM0 5h8L4 9z" fill="#0d1626" /></svg></JumpButton>
            </ScrollColumn>
          </Editor>
          <NotesRow>
            <Notes aria-label="Notes" placeholder="Click to add notes" />
            <NotesScroll>
              <svg width="9" height="5" viewBox="0 0 9 5"><path d="M0 5h9L4.5 0z" fill="#6486b6" /></svg>
              <svg width="9" height="5" viewBox="0 0 9 5"><path d="M0 0h9L4.5 5z" fill="#6486b6" /></svg>
            </NotesScroll>
          </NotesRow>
        </EditorColumn>
      </Workspace>

      <StatusBar>
        <StatusText>Slide 2 of 2</StatusText>
        <StatusText>"Office Theme"</StatusText>
        <Spacer />
        <StatusTools>
          <ViewButtons>
            <ViewButton type="button" $on aria-label="Normal"><Icon name="normalView" size={14} /></ViewButton>
            <ViewButton type="button" aria-label="Slide Sorter"><Icon name="sorterView" size={14} /></ViewButton>
            <ViewButton type="button" aria-label="Slide Show"><Icon name="showView" size={14} /></ViewButton>
          </ViewButtons>
          <ZoomLabel type="button">70%</ZoomLabel>
          <IconButton type="button" aria-label="Zoom out"><Icon name="minus" /></IconButton>
          <ZoomSlider type="range" aria-label="Zoom" value={zoom} onChange={(e) => setZoom(Number(e.target.value))} />
          <IconButton type="button" aria-label="Zoom in"><Icon name="plus" /></IconButton>
          <FitButton type="button" aria-label="Fit slide to window"><Icon name="fit" /></FitButton>
        </StatusTools>
      </StatusBar>
    </Window>
  );
};

export default App;

const GlobalStyle = createGlobalStyle`
  * {
    box-sizing: border-box;
  }

  body {
    margin: 0;
    overflow: hidden;
  }

  button,
  select,
  textarea {
    margin: 0;
    padding: 0;
    border: 0;
    background: none;
    color: inherit;
    font: inherit;
  }

  svg {
    display: block;
    flex: none;
  }
`;

const Window = styled.div`
  position: relative;
  display: flex;
  flex-direction: column;
  height: 100vh;
  background: #bbd8ff;
  color: #1e3c78;
  font: 11px/14px "Noto Sans", "Open Sans", sans-serif;
`;

const OfficeButton = styled.button`
  position: absolute;
  top: 2px;
  left: 2px;
  z-index: 2;
`;

const Spacer = styled.div`
  flex: 1;
`;

const TitleBar = styled.header`
  display: flex;
  align-items: flex-start;
  height: 26px;
  padding-right: 3px;
  background: #80c4ff;
  border-bottom: 1px solid #6fb0ec;
`;

const QuickAccess = styled.div`
  display: flex;
  align-items: center;
  gap: 6px;
  width: 96px;
  height: 22px;
  margin: 2px 8px 0 37px;
  padding-left: 16px;
  border: 1px solid #6aa0da;
  border-left: 0;
  border-radius: 0 11px 11px 0;
  background: #9acbfa;
`;

const IconButton = styled.button`
  display: flex;
  align-items: center;
  align-self: center;
`;

const DocumentTitle = styled.h1`
  width: 558px;
  margin: 0;
  padding-left: 10px;
  color: #173d66;
  font-size: 14px;
  font-weight: 400;
  line-height: 27px;
  text-align: center;
`;

const ContextTools = styled.div`
  width: 87px;
  height: 25px;
  margin-left: 7px;
  color: #23415f;
  line-height: 28px;
  text-align: center;
  background: linear-gradient(#83c4fb, #9fc8d6 60%, #adc9b0 88%, #d8c65c);
`;

const WindowButton = styled.button`
  display: flex;
  align-items: center;
  justify-content: center;
  width: 26px;
  height: 19px;
`;

const CloseButton = styled(WindowButton)`
  width: 45px;
  margin-left: 2px;
  background: #cb5249;
`;

const TabBar = styled.nav`
  display: flex;
  gap: 1px;
  height: 24px;
  padding: 2px 4px 0 48px;
  color: #29508e;
`;

const Tab = styled.button`
  padding: 0 13px 2px;
  border: 1px solid transparent;
  border-bottom: 0;
  border-radius: 3px 3px 0 0;
  white-space: nowrap;

  ${({ $active }) =>
    $active &&
    css`
      padding: 0 11px 2px;
      border-color: #9dbfe8;
      background: linear-gradient(#f4f9ff, #dfeafa);
    `}
`;

const FormatTab = styled(Tab)`
  width: 87px;
  margin-left: 7px;
  border-color: transparent #a6c6ea;
  border-radius: 0;
`;

const Ribbon = styled.section`
  display: flex;
  gap: 4px;
  height: 90px;
  margin: 0 2px;
  padding: 1px 2px 2px;
  border: 1px solid #a5c5ec;
  border-radius: 3px;
  background: linear-gradient(#dfe9f6, #c9d9ee 24%, #bfd3ed 45%, #d5e9fb 85%, #dff3ff);
`;

const Group = styled.div`
  display: flex;
  flex: 0 0 ${({ $width }) => $width}px;
  flex-direction: column;
  min-width: 0;
  border: 1px solid #b3cbe8;
  border-radius: 3px;
  background: linear-gradient(#e0e9f5, #ced9ee 20%, #c6d7ee 45%, #dae8f8 85%);
`;

const GroupBody = styled.div`
  display: flex;
  flex: 1;
  min-height: 0;
  padding: 1px 1px 0;
`;

const GroupTitle = styled.div`
  display: flex;
  height: 15px;
  color: #48699f;
  line-height: 15px;
  background: #c1d8f0;

  span {
    flex: 1;
    text-align: center;
  }
`;

const Launcher = styled.button`
  width: 15px;
  padding-left: 2px;
`;

const Column = styled.div`
  display: flex;
  flex-direction: column;
  align-items: flex-start;
  padding-left: ${({ $inset }) => ($inset ? 5 : 0)}px;
`;

const SmallButton = styled.button`
  display: flex;
  gap: 3px;
  align-items: center;
  height: 22px;
  white-space: nowrap;

  span {
    flex: none;
  }
`;

const BigButton = styled.button`
  display: flex;
  flex: 0 0 ${({ $width }) => $width}px;
  flex-direction: column;
  align-items: center;
  height: 66px;
  margin-right: 2px;
  padding-top: 3px;
  line-height: 13px;
  white-space: nowrap;

  & > svg:first-child {
    margin-bottom: 1px;
  }

  & > svg:last-child {
    margin-top: 4px;
  }
`;

const Inline = styled.span`
  display: flex;
  gap: 3px;
  align-items: center;
`;

const ToolRows = styled.div`
  display: flex;
  flex-direction: column;
  gap: 7px;
  margin: 8px 3px 0 2px;
`;

const ToolRow = styled.div`
  display: flex;
  gap: 4px;
  height: 22px;
`;

const ComboPair = styled.div`
  display: flex;
`;

const ComboBox = styled.span`
  display: grid;
  flex: 0 0 ${({ $width }) => $width}px;
  align-items: center;
  border: 1px solid #b1c9e8;
  background: #edf4fc;
  color: #111;

  select {
    grid-area: 1 / 1;
    width: 100%;
    min-width: 0;
    padding: 0 14px 0 2px;
    outline: 0;
    appearance: none;
  }

  svg {
    grid-area: 1 / 1;
    justify-self: end;
    margin-right: 4px;
    pointer-events: none;
  }
`;

const ToolSet = styled.div`
  display: flex;
  border: 1px solid #a3bddf;
  border-radius: 2px;
  background: rgba(214, 226, 243, 0.6);
`;

const Tool = styled.button`
  display: flex;
  flex: 0 0 ${({ $width }) => $width}px;
  align-items: center;
  justify-content: center;
  overflow: hidden;

  ${({ $on }) =>
    $on &&
    css`
      outline: 1px solid #c8a165;
      outline-offset: -1px;
      background: linear-gradient(#fbc58b, #fcb45c 45%, #ffe48f);
    `}
`;

const Glyph = styled.span`
  color: #1c2536;
  font-family: "Liberation Serif", serif;
  font-size: ${({ $size }) => $size}px;
  font-style: ${({ $italic }) => ($italic ? "italic" : "normal")};
  font-weight: ${({ $plain }) => ($plain ? 400 : 700)};
  line-height: ${({ $plain }) => ($plain ? "10px" : "18px")};
  text-decoration: ${({ $line }) => $line || "none"};
  text-shadow: ${({ $shadow }) => ($shadow ? "2px 1px 2px #7d8797" : "none")};
`;

const Sup = styled.span`
  align-self: flex-start;
  color: #35548a;
  font: 8px/12px "DejaVu Sans", sans-serif;
`;

const Stack = styled.span`
  display: flex;
  flex-direction: column;
  align-items: center;
  margin-right: 3px;
`;

const FontColor = styled.span`
  width: 16px;
  border-bottom: 4px solid #e8211a;
  color: #3d5f9e;
  font: 700 14px/13px "Liberation Serif", serif;
  text-align: center;
`;

const Gap = styled.span`
  width: ${({ $small }) => ($small ? 2 : 5)}px;
`;

const Gallery = styled.div`
  display: flex;
  width: 138px;
  height: 60px;
  margin: 3px 2px 0 3px;
  border: 1px solid #b3cae6;
  background: #d6e3f4;
`;

const GalleryGrid = styled.div`
  display: grid;
  flex: 1;
  grid-template-columns: repeat(6, 20px);
  grid-auto-rows: 19px;
`;

const ShapeButton = styled.button`
  display: flex;
  align-items: center;
  justify-content: center;
`;

const GalleryScroll = styled.div`
  display: flex;
  flex: 0 0 14px;
  flex-direction: column;

  button {
    display: flex;
    flex: 1;
    align-items: center;
    justify-content: center;
    border: 1px solid #c2d4ec;
    background: #dbe7f6;
  }
`;

const ReplaceMark = styled.span`
  display: flex;
  flex-direction: column;
  width: 16px;
  color: #3a4558;
  font: 9px/10px "Liberation Sans", sans-serif;
`;

const ReplaceTarget = styled.span`
  display: flex;
  color: #2b7a43;
`;

const Workspace = styled.main`
  display: flex;
  flex: 1;
  min-height: 0;
  padding-right: 4px;
`;

const SlidePane = styled.aside`
  flex: 0 0 213px;
  margin-right: 4px;
  padding-top: 2px;
  border-right: 1px solid #5f88c2;
  background: linear-gradient(#9ebfee, #8bade0 22%, #6289c3 60%, #577fb8 75%, #6190cf);
`;

const PaneHeader = styled.div`
  display: flex;
  height: 20px;
  padding-right: 7px;
  border-bottom: 1px solid #6b9bdb;
  background: linear-gradient(#9fc0ee, #b9d4fa);
`;

const PaneTabs = styled.div`
  display: flex;
  filter: drop-shadow(1px 0 0 #5f86be);
`;

const PaneTab = styled.button`
  width: ${({ $active }) => ($active ? 64 : 60)}px;
  padding-left: ${({ $active }) => ($active ? 8 : 2)}px;
  background: ${({ $active }) => ($active ? "#e3eefd" : "#b9d2f6")};
  color: ${({ $active }) => ($active ? "#0c2a6b" : "#24437e")};
  clip-path: polygon(0 0, calc(100% - 16px) 0, 100% 100%, 0 100%);
  font-weight: ${({ $active }) => ($active ? 700 : 400)};
  text-align: left;
`;

const SlideList = styled.ol`
  display: flex;
  flex-direction: column;
  gap: 3px;
  margin: 0;
  padding: 4px 4px 0 3px;
  list-style: none;
`;

const SlideItem = styled.li`
  display: flex;
  gap: 9px;
  padding: 3px 2px 3px 3px;
  border: 1px solid transparent;
  color: #fff;
  font: 700 10px/22px "DejaVu Sans", "Noto Sans", sans-serif;
  text-shadow: 1px 1px 1px #44556d;

  ${({ $selected }) =>
    $selected &&
    css`
      border-color: #f0a23c;
      background: linear-gradient(#f9d498, #f6c27a 35%, #fda83a 37%, #f9a234);
    `}
`;

const Thumb = styled.svg`
  flex: 1;
  min-width: 0;
  border: 1px solid #54606f;
  background: #fff;
  box-shadow: 2px 2px 2px rgba(50, 60, 90, 0.5);
`;

const EditorColumn = styled.div`
  display: flex;
  flex: 1;
  flex-direction: column;
  min-width: 0;
  border-left: 1px solid #6b93cb;
`;

const Editor = styled.section`
  display: grid;
  flex: 1;
  grid-template: 30px 1fr / 28px 1fr 15px;
  min-height: 0;
  border-bottom: 1px solid #7fa6dc;
`;

const Corner = styled.div`
  background: #9bb9e5;
`;

const TopRuler = styled.div`
  display: flex;
  justify-content: center;
  align-items: center;
  padding: 0 2px 4px 0;
  background: #9bb9e5;
`;

const SideRuler = styled.div`
  display: flex;
  justify-content: center;
  padding-top: 15px;
  padding-right: 6px;
  background: linear-gradient(#9bb9e5, #86a9dc 60%, #a0bfec);
`;

const Canvas = styled.div`
  display: flex;
  justify-content: center;
  min-width: 0;
  padding: 15px 2px 0 0;
  background:
    linear-gradient(to bottom right, #b0cff6 49%, transparent 51%) 0 0 / 72px 20px no-repeat,
    linear-gradient(#9bb9e5, #83a5d9 20%, #6990c9 50%, #537fb6 82%, #5f8cc8);
`;

const Slide = styled.div`
  position: relative;
  align-self: flex-start;
  background: #fff;
  box-shadow: 2px 2px 4px rgba(25, 45, 70, 0.8);
`;

const popup = css`
  position: absolute;
  z-index: 3;
  border: 1px solid #8d949f;
  box-shadow: 2px 2px 3px rgba(40, 50, 70, 0.6);
`;

const MiniToolbar = styled.div`
  ${popup}
  top: 9px;
  left: -61px;
  width: 239px;
  border-radius: 2px;
  background: #f1f3f6;
`;

const MiniRow = styled.div`
  display: flex;
  height: 24px;
  padding: 0 1px;
`;

const menuBackground = css`
  background: linear-gradient(90deg, #e9eef1 25px, #c9cdd2 25px, #c9cdd2 26px, #fbfcfd 26px);
`;

const ContextMenu = styled.div`
  ${popup}
  ${menuBackground}
  top: 76px;
  left: -61px;
  width: 239px;
`;

const SubMenu = styled.div`
  ${popup}
  ${menuBackground}
  top: 192px;
  left: -193px;
  width: 133px;
`;

const MenuItem = styled.button`
  display: flex;
  align-items: center;
  width: 100%;
  height: 22px;
  color: #11204e;
  text-align: left;

  &:disabled {
    color: #a2a4a8;
  }
`;

const MenuIcon = styled.span`
  display: flex;
  justify-content: center;
  width: 25px;
`;

const MenuText = styled.span`
  flex: 1;
  padding-left: 9px;
  white-space: nowrap;
`;

const MenuArrow = styled.span`
  width: 23px;
  padding: 3px 0 3px 8px;
  border-left: 1px solid ${({ $split }) => ($split ? "#9da1a8" : "transparent")};
`;

const Separator = styled.div`
  height: 2px;
  margin-left: 33px;
  border-top: 1px solid #c5c8cc;
`;

const RulerText = styled.text`
  fill: #444b57;
  font: 11px "Noto Sans", sans-serif;
  text-anchor: middle;
  stroke: #fff;
  stroke-width: 3px;
  paint-order: stroke;
`;

const ScrollColumn = styled.div`
  display: flex;
  flex-direction: column;
  padding-bottom: 15px;
  background: #aecbf3;
`;

const ScrollButton = styled.button`
  display: flex;
  align-items: center;
  justify-content: center;
  height: 17px;
  background: #7ea3d3;
`;

const ScrollTrack = styled.div`
  display: flex;
  flex: 1;
  align-items: flex-end;
  background: linear-gradient(90deg, #6287ba, #7ea3d3);
`;

const ScrollThumb = styled.div`
  display: flex;
  align-items: center;
  justify-content: center;
  width: 100%;
  height: 50%;
  border: 1px solid #5e7ba8;
  background: linear-gradient(90deg, #f3f6fa, #d4dfec);
`;

const JumpButton = styled.button`
  display: flex;
  align-items: center;
  justify-content: center;
  height: 16px;
`;

const NotesRow = styled.div`
  display: flex;
  height: 39px;
  margin-top: 4px;
  border-top: 1px solid #6b93cb;
  background: #fff;
`;

const Notes = styled.textarea`
  flex: 1;
  height: 37px;
  padding: 4px 10px;
  outline: 0;
  resize: none;
  font-size: 15px;
  line-height: 22px;

  &::placeholder {
    color: #222;
    opacity: 1;
  }
`;

const NotesScroll = styled.div`
  display: flex;
  flex-direction: column;
  align-items: center;
  justify-content: space-between;
  width: 15px;
  padding: 6px 0;
  background: #86a9d8;
`;

const StatusBar = styled.footer`
  display: flex;
  align-items: center;
  height: 23px;
  border-top: 1px solid #6e94cc;
  border-bottom: 2px solid #8aa9d2;
  background: linear-gradient(#e6f1ff, #cfe1fb 45%, #b9d2f7 50%, #c7defc);
  color: #15315f;
`;

const StatusText = styled.span`
  padding: 2px 8px;
  border-right: 1px solid #9dbbe4;
`;

const StatusTools = styled.div`
  display: flex;
  align-items: center;
  padding: 0 5px 0 4px;
  border-left: 1px solid #6e94cc;
  background: linear-gradient(#b9d2f5, #9fc0ee);
`;

const ViewButtons = styled.div`
  display: flex;
  border: 1px solid #7fa1d0;
`;

const ViewButton = styled.button`
  display: flex;
  align-items: center;
  justify-content: center;
  width: 18px;
  height: 18px;
  background: ${({ $on }) => ($on ? "linear-gradient(#fcd9a0, #f8b55f)" : "#d7e6fa")};
`;

const ZoomLabel = styled.button`
  width: 39px;
`;

const ZoomSlider = styled.input`
  width: 102px;
  height: 14px;
  margin: 0;
  appearance: none;
  background:
    linear-gradient(#eef5ff, #eef5ff) 52px 50% / 1px 8px no-repeat,
    linear-gradient(#54709e, #54709e) 0 50% / 100% 1px no-repeat;

  &::-webkit-slider-thumb {
    width: 9px;
    height: 13px;
    border: 1px solid #4e6690;
    border-radius: 1px 1px 5px 5px;
    appearance: none;
    background: #e3eefd;
  }
`;

const FitButton = styled(IconButton)`
  margin-left: 9px;
`;
